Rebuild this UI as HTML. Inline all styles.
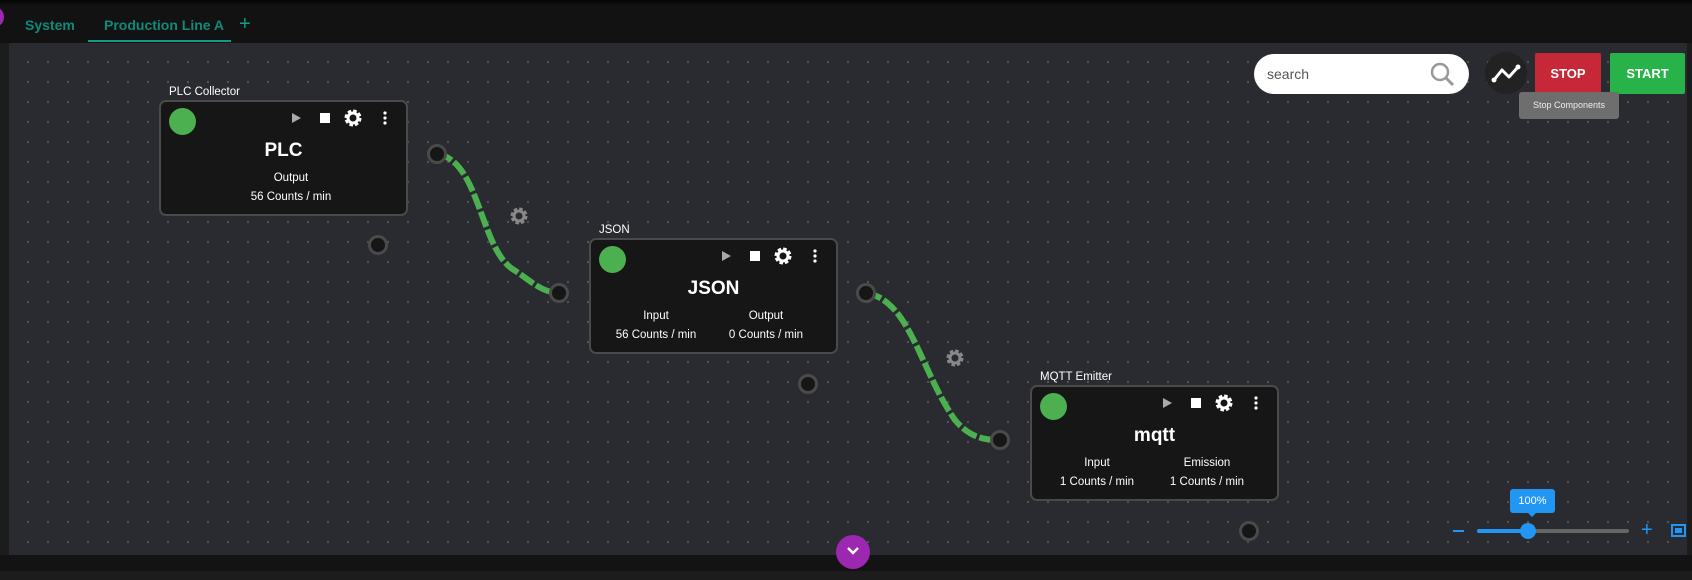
<!DOCTYPE html><html><head><style>
*{margin:0;padding:0;box-sizing:border-box}
body{width:1692px;height:580px;background:#1c1c1c;font-family:"Liberation Sans",sans-serif;position:relative;overflow:hidden;color:#fff}
.top{position:absolute;left:0;top:0;width:1692px;height:43px;background:#121212}
.top::before{content:"";position:absolute;left:0;top:0;width:1692px;height:6px;background:linear-gradient(#050505,#121212)}
.tab{position:absolute;top:17px;font-size:14px;font-weight:bold;color:#0f8a7a}
.canvas{position:absolute;left:9px;top:43px;width:1678px;height:512px;background-color:#2a2b30;background-image:radial-gradient(circle,#555 1px,transparent 1.3px);background-size:20px 20px;background-position:9px 9px}
.strip{position:absolute;left:0;top:555px;width:1692px;height:16px;background:#131313}
.node{position:absolute;background:#161616;border:2px solid #4a4a4a;border-radius:7px}
.lbl{position:absolute;font-size:11.5px;color:#fff}
.dot{position:absolute;left:8px;top:6px;width:27px;height:27px;border-radius:50%;background:#4caf50}
.t{position:absolute;width:100%;text-align:center;font-weight:bold;font-size:19px;top:38px}
.s{position:absolute;font-size:11.5px;text-align:center}
.h{position:absolute;width:20px;height:20px;border-radius:50%;background:#161616;border:3px solid #4a4a4a;transform:translate(-50%,-50%)}
</style></head><body>
<div class="top"></div>
<div style="position:absolute;left:-10px;top:8px;width:14px;height:18px;border-radius:50%;background:#9c27b0"></div>
<div class="tab" style="left:25px">System</div>
<div class="tab" style="left:104px">Production Line A</div>
<div style="position:absolute;left:88px;top:40px;width:143px;height:2px;background:#0f9c88"></div>
<div style="position:absolute;left:239px;top:13px;font-size:20px;color:#0f9c88">+</div>
<div class="canvas"></div>
<div class="strip"></div>
<svg style="position:absolute;left:0;top:0" width="1692" height="580">
<defs>
<g id="gear"><circle r="6.5" stroke="currentColor" stroke-width="4" fill="none" stroke-dasharray="3.2 1.9"/><circle r="5" stroke="currentColor" stroke-width="3" fill="none"/></g>
</defs>
<path d="M437 154 C480 160,480 250,514 270 C530 280,540 292,559 293" stroke="#4caf50" stroke-width="6" fill="none" stroke-dasharray="16 3"/>
<path d="M866 293 C910 300,920 370,955 420 C970 438,985 440,1000 440" stroke="#4caf50" stroke-width="6" fill="none" stroke-dasharray="16 3"/>
<use href="#gear" x="519" y="216" style="color:#888"/>
<use href="#gear" x="955" y="358" style="color:#888"/>
</svg>
<div class="h" style="left:437px;top:154px"></div><div class="h" style="left:378px;top:245px"></div>
<div class="h" style="left:559px;top:293px"></div><div class="h" style="left:866px;top:293px"></div><div class="h" style="left:808px;top:384px"></div>
<div class="h" style="left:1000px;top:440px"></div><div class="h" style="left:1249px;top:531px"></div>

<div class="lbl" style="left:169px;top:86px">PLC Collector</div>
<div class="node" style="left:159px;top:100px;width:249px;height:116px"><div class="dot"></div>
<div class="t">PLC</div><div class="s" style="width:200px;top:70px;left:30px">Output</div><div class="s" style="left:30px;width:200px;top:89px">56 Counts / min</div></div>

<div class="lbl" style="left:599px;top:224px">JSON</div>
<div class="node" style="left:589px;top:238px;width:249px;height:116px"><div class="dot"></div>
<div class="t">JSON</div><div class="s" style="left:10px;width:110px;top:70px">Input</div><div class="s" style="left:10px;width:110px;top:89px">56 Counts / min</div>
<div class="s" style="left:120px;width:110px;top:70px">Output</div><div class="s" style="left:120px;width:110px;top:89px">0 Counts / min</div></div>

<div class="lbl" style="left:1040px;top:371px">MQTT Emitter</div>
<div class="node" style="left:1030px;top:385px;width:249px;height:116px"><div class="dot"></div>
<div class="t">mqtt</div><div class="s" style="left:10px;width:110px;top:70px">Input</div><div class="s" style="left:10px;width:110px;top:89px">1 Counts / min</div>
<div class="s" style="left:120px;width:110px;top:70px">Emission</div><div class="s" style="left:120px;width:110px;top:89px">1 Counts / min</div></div>

<svg style="position:absolute;left:0;top:0" width="1692" height="580">
<defs>
<g id="gear2"><circle r="6.5" stroke="#fff" stroke-width="4" fill="none" stroke-dasharray="3.2 1.9"/><circle r="5" stroke="#fff" stroke-width="3" fill="none"/></g>
<g id="ic"><path d="M0 -5 L9 0 L0 5Z" fill="#aaa"/><rect x="28" y="-5" width="10" height="10" fill="#fff"/><use href="#gear2" x="61" y="0"/><circle cx="93" cy="-5" r="1.6" fill="#fff"/><circle cx="93" cy="0" r="1.6" fill="#fff"/><circle cx="93" cy="5" r="1.6" fill="#fff"/></g>
</defs>
<use href="#ic" x="292" y="118"/>
<use href="#ic" x="722" y="256"/>
<use href="#ic" x="1163" y="403"/>
</svg>

<div style="position:absolute;left:1254px;top:54px;width:215px;height:40px;border-radius:20px;background:#fff"><span style="position:absolute;left:13px;top:12px;font-size:14px;color:#555">search</span>
<svg style="position:absolute;left:175px;top:7px" width="26" height="26"><circle cx="11" cy="11" r="8" stroke="#999" stroke-width="2.5" fill="none"/><path d="M17 17 L24 24" stroke="#999" stroke-width="3"/></svg></div>
<div style="position:absolute;left:1485px;top:52px;width:42px;height:42px;border-radius:50%;background:#222"></div>
<svg style="position:absolute;left:1490px;top:60px" width="32" height="26"><path d="M4 20 L12 10 L19 17 L28 7" stroke="#fff" stroke-width="3" fill="none" stroke-linejoin="round"/><circle cx="4" cy="20" r="2.5" fill="#fff"/><circle cx="28" cy="7" r="2.5" fill="#fff"/></svg>
<div style="position:absolute;left:1535px;top:53px;width:66px;height:41px;background:#c62838;border-radius:2px;font-weight:bold;font-size:13px;text-align:center;line-height:41px">STOP</div>
<div style="position:absolute;left:1610px;top:53px;width:75px;height:41px;background:#28b34a;border-radius:2px;font-weight:bold;font-size:13px;text-align:center;line-height:41px">START</div>
<div style="position:absolute;left:1519px;top:92px;width:100px;height:27px;background:#6e6e6e;border-radius:3px;font-size:9px;text-align:center;line-height:27px;color:#eee">Stop Components</div>

<div style="position:absolute;left:1510px;top:489px;width:45px;height:24px;background:#2196f3;border-radius:3px;font-size:11px;text-align:center;line-height:24px">100%</div>
<div style="position:absolute;left:1527px;top:512px;border:5px solid transparent;border-top-color:#2196f3"></div>
<div style="position:absolute;left:1453px;top:530px;width:11px;height:2px;background:#2196f3"></div>
<div style="position:absolute;left:1477px;top:529px;width:152px;height:4px;background:#666;border-radius:2px"></div>
<div style="position:absolute;left:1477px;top:529px;width:50px;height:4px;background:#2196f3;border-radius:2px"></div>
<div style="position:absolute;left:1520px;top:523px;width:16px;height:16px;border-radius:50%;background:#2196f3"></div>
<div style="position:absolute;left:1641px;top:519px;font-size:20px;color:#2196f3">+</div>
<div style="position:absolute;left:1671px;top:524px;width:15px;height:13px;border:2px solid #2196f3;padding:2px"><div style="width:100%;height:100%;background:#2196f3"></div></div>
<div style="position:absolute;left:836px;top:535px;width:34px;height:34px;border-radius:50%;background:#9c27b0"></div>
<svg style="position:absolute;left:845px;top:545px" width="16" height="12"><path d="M3 3 L8 8 L13 3" stroke="#fff" stroke-width="2.5" fill="none"/></svg>
</body></html>
